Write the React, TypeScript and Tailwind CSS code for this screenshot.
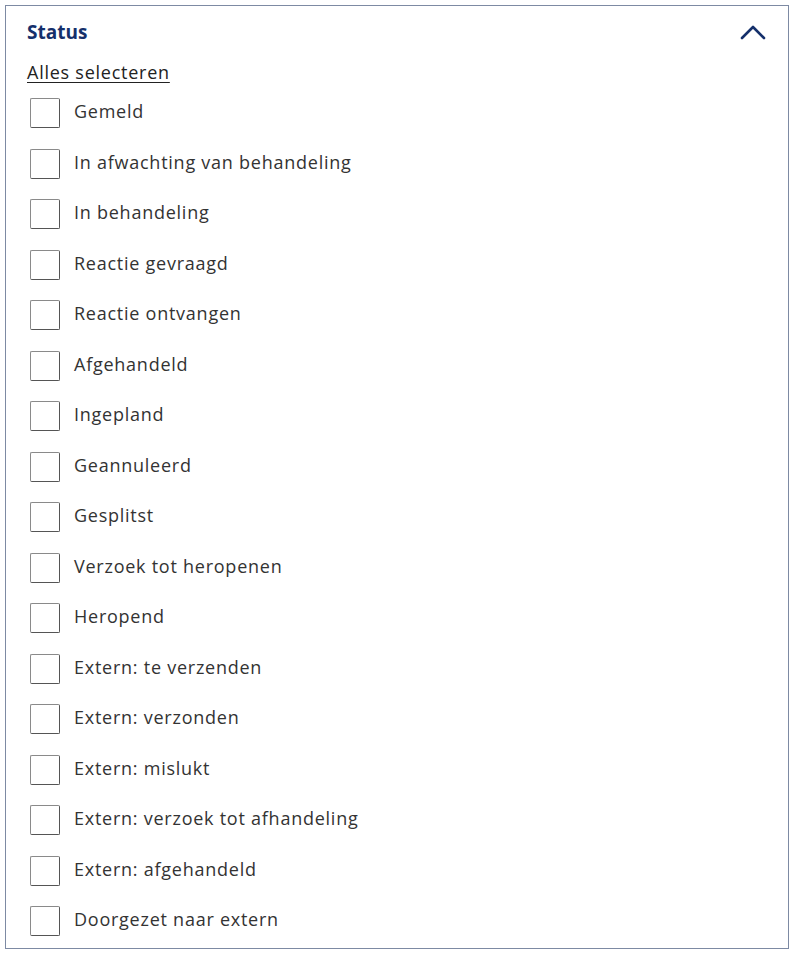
import { useState } from "react";

const STATUSES = [
  "Gemeld",
  "In afwachting van behandeling",
  "In behandeling",
  "Reactie gevraagd",
  "Reactie ontvangen",
  "Afgehandeld",
  "Ingepland",
  "Geannuleerd",
  "Gesplitst",
  "Verzoek tot heropenen",
  "Heropend",
  "Extern: te verzenden",
  "Extern: verzonden",
  "Extern: mislukt",
  "Extern: verzoek tot afhandeling",
  "Extern: afgehandeld",
  "Doorgezet naar extern",
];

export default function App() {
  const [checked, setChecked] = useState<Record<string, boolean>>({});

  return (
    <div className="min-h-screen bg-white p-[5px] font-['Open_Sans',sans-serif]">
      <section className="h-[944px] border border-[#7d8aa3] pl-[21px] pr-[20px]">
        <header className="flex h-[52px] items-center justify-between">
          <h2 className="text-[19px] font-bold leading-none text-[#15306b]">Status</h2>
          <svg width="28" height="18" viewBox="0 0 28 18" className="mr-[1px]">
            <path d="M3 15 L14 4 L25 15" fill="none" stroke="#15306b" strokeWidth="2.6" strokeLinecap="round" strokeLinejoin="round" />
          </svg>
        </header>
        <button
          type="button"
          className="mt-[2px] block text-[18px] leading-[24px] tracking-[0.75px] text-[#222] underline underline-offset-[3px]"
          onClick={() => {
            const all: Record<string, boolean> = {};
            STATUSES.forEach((s) => (all[s] = true));
            setChecked(all);
          }}
        >
          Alles selecteren
        </button>
        <ul className="mt-[14px] pl-[3px]">
          {STATUSES.map((s) => (
            <li key={s} className="flex h-[50.5px] items-start">
              <label className="flex cursor-pointer items-center gap-[14px]">
                <input
                  type="checkbox"
                  className="peer sr-only"
                  checked={!!checked[s]}
                  onChange={() => setChecked((c) => ({ ...c, [s]: !c[s] }))}
                />
                <span className="block size-[30px] rounded-[2px] border border-[#8a8a8a] border-b-[#555] border-r-[#555] bg-white peer-checked:bg-[#15306b]" />
                <span className="-mt-[4px] text-[18px] leading-[24px] tracking-[0.75px] text-[#333]">{s}</span>
              </label>
            </li>
          ))}
        </ul>
      </section>
    </div>
  );
}
